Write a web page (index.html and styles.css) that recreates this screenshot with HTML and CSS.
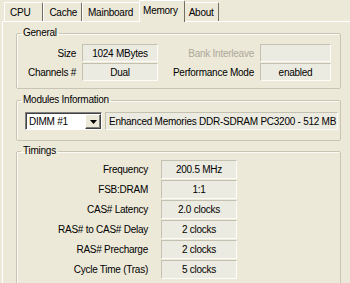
FILE: index.html
```html
<!DOCTYPE html>
<html lang="en">
<head>
  <meta charset="UTF-8" />
  <title>CPU-Z Memory</title>
  <link rel="stylesheet" href="styles.css">
</head>
<body>
  <div class="window">
    <div class="tabs">
      <div class="tab tab-cpu">CPU</div>
      <div class="tab">Cache</div>
      <div class="tab tab-board">Mainboard</div>
      <div class="tab active">Memory</div>
      <div class="tab">About</div>
    </div>

    <div class="panel">
      <fieldset class="group general">
        <legend>General</legend>
        <div class="general-grid">
          <span class="label">Size</span>
          <span class="field">1024 MBytes</span>
          <span class="label disabled">Bank Interleave</span>
          <span class="field"></span>
          <span class="label">Channels #</span>
          <span class="field">Dual</span>
          <span class="label">Performance Mode</span>
          <span class="field">enabled</span>
        </div>
      </fieldset>

      <fieldset class="group modules">
        <legend>Modules Information</legend>
        <div class="modules-row">
          <div class="select">
            <span class="select-text">DIMM #1</span>
            <span class="select-btn">
              <svg width="7" height="4" viewBox="0 0 7 4"><path d="M0 0h7L3.5 4z" fill="#000"/></svg>
            </span>
          </div>
          <span class="field wide">Enhanced Memories DDR-SDRAM PC3200 - 512 MB</span>
        </div>
      </fieldset>

      <fieldset class="group timings">
        <legend>Timings</legend>
        <div class="timings-grid">
          <span class="label">Frequency</span>
          <span class="field">200.5 MHz</span>
          <span class="label">FSB:DRAM</span>
          <span class="field">1:1</span>
          <span class="label">CAS# Latency</span>
          <span class="field">2.0 clocks</span>
          <span class="label">RAS# to CAS# Delay</span>
          <span class="field">2 clocks</span>
          <span class="label">RAS# Precharge</span>
          <span class="field">2 clocks</span>
          <span class="label">Cycle Time (Tras)</span>
          <span class="field">5 clocks</span>
        </div>
      </fieldset>
    </div>
  </div>
</body>
</html>
```

FILE: styles.css
```css
body {
  margin: 0;
  background: #ece9d8;
  font-family: "Liberation Sans", Arial, sans-serif;
  font-size: 10px;
  letter-spacing: -0.25px;
  color: #000;
  overflow: hidden;
}

.window {
  padding-left: 2px;
  height: 283px;
}

.tabs {
  display: flex;
  height: 21px;
  padding-left: 2px;
  align-items: flex-end;
}

.tab {
  position: relative;
  height: 18px;
  line-height: 19px;
  padding: 0 4px 0 5px;
  border-top: 1px solid #fff;
  border-left: 1px solid #fff;
  border-right: 1px solid #716f64;
  border-radius: 2px 2px 0 0;
}

.tab-cpu {
  padding-right: 12px;
}

.tab-board {
  padding-right: 7px;
}

.tab.active {
  height: 21px;
  line-height: 20px;
  margin: 0 -2px -1px -2px;
  padding: 0 6px 0 3px;
  background: #ece9d8;
  z-index: 1;
}

.panel {
  border-top: 1px solid #fff;
  border-left: 1px solid #fff;
  padding: 5px 0 0 13px;
}

.group {
  margin: 0;
  width: 323px;
  padding: 0;
  border: 1px solid #c8c5b4;
  box-shadow: inset 1px 1px 0 #fbfaf5;
  border-radius: 2px;
}

.group legend {
  margin-left: 4px;
  padding: 0 2px;
  line-height: 12px;
}

.label {
  text-align: right;
  white-space: nowrap;
}

.label.disabled {
  color: #aca899;
}

.field {
  display: flex;
  align-items: center;
  justify-content: center;
  box-sizing: border-box;
  background: #ecebe1;
  border: 1px solid;
  border-color: #c4c1b1 #fdfcf8 #fdfcf8 #c4c1b1;
  white-space: nowrap;
}

.general-grid {
  display: grid;
  grid-template-columns: 56px 76px 90px 71px;
  grid-auto-rows: 18px;
  column-gap: 6px;
  row-gap: 1px;
  align-items: center;
  padding: 5px 0 7px 3px;
}

.general-grid .field {
  height: 18px;
}

.modules {
  margin-top: 5px;
}

.modules-row {
  display: flex;
  gap: 3px;
  padding: 6px 0 10px 8px;
}

.select {
  display: flex;
  box-sizing: border-box;
  width: 77px;
  height: 18px;
  background: #fff;
  border: 1px solid;
  border-color: #808080 #fff #fff #808080;
  box-shadow: inset 1px 1px 0 #404040;
}

.select-text {
  flex: 1;
  padding: 1px 0 0 3px;
  line-height: 15px;
}

.select-btn {
  display: flex;
  align-items: center;
  justify-content: center;
  width: 16px;
  margin: 1px 0 0 0;
  background: #ece9d8;
  box-sizing: border-box;
  border: 1px solid;
  border-color: #fff #404040 #404040 #fff;
  box-shadow: inset -1px -1px 0 #808080;
}

.field.wide {
  width: 233px;
  height: 18px;
  justify-content: flex-start;
  padding-left: 3px;
}

.timings {
  margin-top: 4px;
}

.timings-grid {
  display: grid;
  grid-template-columns: 127px 76px;
  grid-auto-rows: 19px;
  column-gap: 13px;
  row-gap: 1px;
  align-items: center;
  padding: 3px 0 10px 4px;
}

.timings-grid .field {
  height: 19px;
}
```
